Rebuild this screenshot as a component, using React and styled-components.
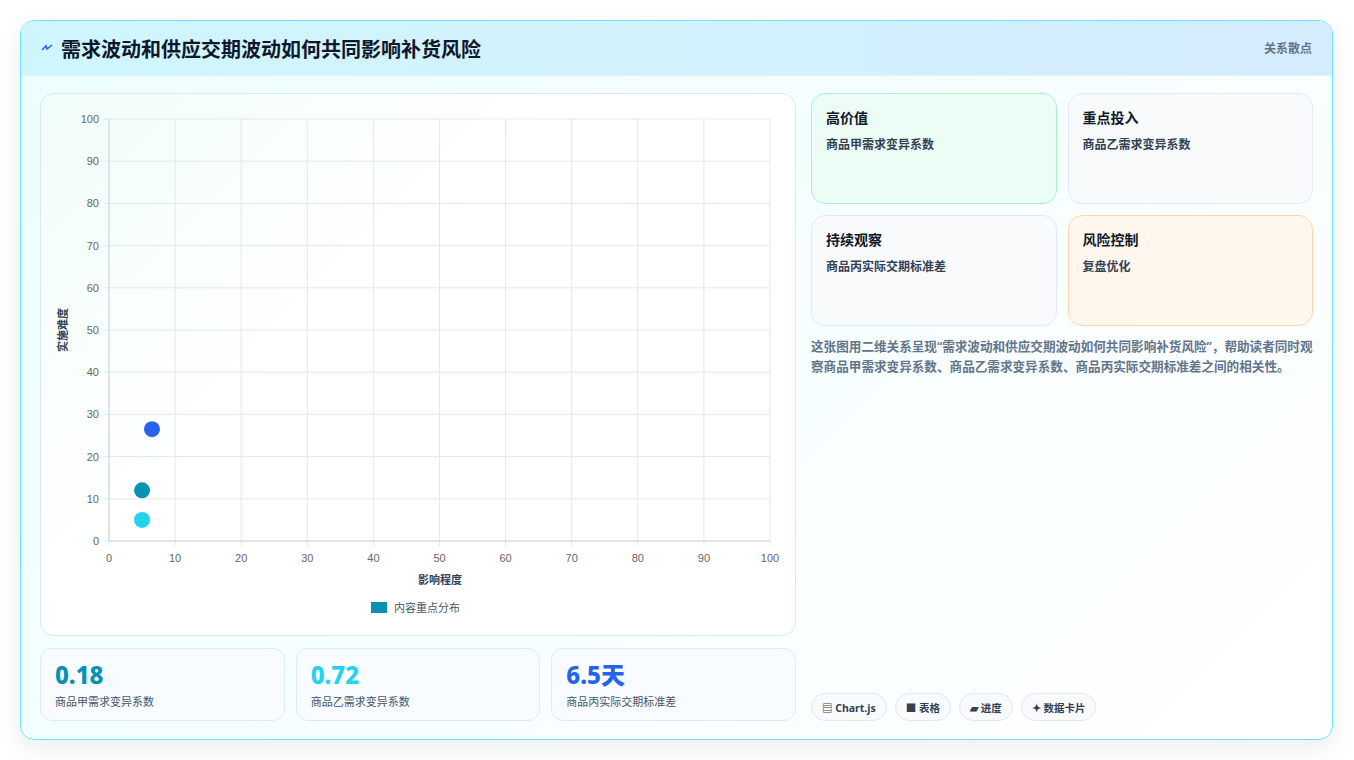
import styled, { createGlobalStyle } from "styled-components";

const Global = createGlobalStyle`
  html, body { margin: 0; padding: 0; background: #fff; }
  body { font-family: "Noto Sans", "Noto Sans CJK SC", sans-serif; }
  * { box-sizing: border-box; }
`;

const Page = styled.div`
  padding: 20px 21px 20px 20px;
  height: 760px;
`;

const Frame = styled.div`
  height: 720px;
  border: 1px solid #67e8f9;
  border-radius: 14px;
  overflow: hidden;
  background: linear-gradient(135deg, #ecfeff 0%, #f8feff 60%, #ffffff 100%);
  box-shadow: 0 8px 24px rgba(15, 23, 42, 0.08);
  display: flex;
  flex-direction: column;
`;

const Header = styled.div`
  height: 55px;
  flex: none;
  display: flex;
  align-items: center;
  justify-content: space-between;
  padding: 0 20px;
  background: linear-gradient(90deg, #cff6fe 0%, #d5ecfd 100%);
  border-bottom: 1px solid #e0f2fe;
`;

const Title = styled.h1`
  margin: 0;
  font-size: 20px;
  font-weight: 700;
  color: #0f172a;
  display: flex;
  align-items: center;
  gap: 8px;
`;

const Tag = styled.span`
  font-size: 12px;
  color: #64748b;
  font-weight: 600;
`;

const Body = styled.div`
  flex: 1;
  display: grid;
  grid-template-columns: 756px 1fr;
  gap: 15px;
  padding: 17px 19px 18px 19px;
`;

const LeftCol = styled.div`
  display: flex;
  flex-direction: column;
  gap: 12px;
`;

const ChartCard = styled.div`
  height: 543px;
  border: 1px solid #dbe7f3;
  border-radius: 14px;
  background: linear-gradient(135deg, #f0fdf9 0%, #ffffff 40%);
`;

const Stats = styled.div`
  display: grid;
  grid-template-columns: repeat(3, 1fr);
  gap: 11px;
`;

const Stat = styled.div`
  height: 73px;
  border: 1px solid #dbeafe;
  border-radius: 12px;
  background: #f8fbff;
  padding: 10px 14px;
`;

const StatValue = styled.div`
  font-size: 24px;
  font-weight: 800;
  color: ${(p) => p.$color};
  line-height: 32px;
`;

const StatLabel = styled.div`
  font-size: 11px;
  color: #475569;
  margin-top: 2px;
`;

const RightCol = styled.div`
  display: flex;
  flex-direction: column;
`;

const Grid = styled.div`
  display: grid;
  grid-template-columns: 1fr 1fr;
  gap: 11px 11px;
`;

const Quad = styled.div`
  height: 111px;
  border-radius: 14px;
  border: 1px solid ${(p) => p.$border};
  background: ${(p) => p.$bg};
  padding: 13px 14px;
`;

const QuadTitle = styled.div`
  font-size: 14px;
  font-weight: 700;
  color: #0f172a;
`;

const QuadText = styled.div`
  font-size: 12px;
  font-weight: 600;
  color: #334155;
  margin-top: 8px;
`;

const Desc = styled.p`
  margin: 11px 0 0;
  font-size: 12.6px;
  line-height: 20px;
  color: #64748b;
  font-weight: 600;
`;

const Chips = styled.div`
  margin-top: auto;
  display: flex;
  gap: 8px;
`;

const Chip = styled.span`
  height: 28px;
  padding: 0 10px;
  border: 1px solid #e2e8f0;
  border-radius: 14px;
  background: #f8fafc;
  font-size: 10.5px;
  font-weight: 700;
  color: #334155;
  display: flex;
  align-items: center;
  gap: 3px;
`;

const X0 = 68, X1 = 729, Y0 = 447, Y1 = 25;
const sx = (v) => X0 + ((X1 - X0) * v) / 100;
const sy = (v) => Y0 - ((Y0 - Y1) * v) / 100;
const ticks = [0, 10, 20, 30, 40, 50, 60, 70, 80, 90, 100];
const points = [
  { x: 6.5, y: 26.5, c: "#2563eb" },
  { x: 5, y: 12, c: "#0891b2" },
  { x: 5, y: 5, c: "#22d3ee" },
];

function Chart() {
  return (
    <svg width="754" height="541" style={{ display: "block" }}>
      {ticks.map((t) => (
        <g key={t}>
          <line x1={sx(t)} x2={sx(t)} y1={Y1} y2={Y0 + 5} stroke="#e2e8f0" />
          <line x1={X0 - 5} x2={X1} y1={sy(t)} y2={sy(t)} stroke="#e2e8f0" />
          <text x={X0 - 10} y={sy(t) + 4} fontSize="11" fill="#666" textAnchor="end" fontFamily="Liberation Sans, sans-serif">{t}</text>
          <text x={sx(t)} y={Y0 + 21} fontSize="11" fill="#666" textAnchor="middle" fontFamily="Liberation Sans, sans-serif">{t}</text>
        </g>
      ))}
      <line x1={X0} x2={X0} y1={Y1} y2={Y0} stroke="#cbd5e1" />
      <line x1={X0} x2={X1} y1={Y0} y2={Y0} stroke="#cbd5e1" />
      <text x="399" y="490" fontSize="11" fill="#334155" textAnchor="middle" fontWeight="600">影响程度</text>
      <text transform="translate(26 236) rotate(-90)" fontSize="11" fill="#334155" textAnchor="middle" fontWeight="600">实施难度</text>
      {points.map((p, i) => (
        <circle key={i} cx={sx(p.x)} cy={sy(p.y)} r="8" fill={p.c} />
      ))}
      <rect x="330" y="508" width="16" height="11" fill="#0891b2" />
      <text x="353" y="518" fontSize="11" fill="#475569">内容重点分布</text>
    </svg>
  );
}

export default function App() {
  return (
    <Page>
      <Global />
      <Frame>
        <Header>
          <Title>
            <svg width="12" height="12" viewBox="0 0 12 12">
              <path d="M1 8 L5 4 L6 7 L11 3" stroke="#2563eb" strokeWidth="1.6" fill="none" />
            </svg>
            需求波动和供应交期波动如何共同影响补货风险
          </Title>
          <Tag>关系散点</Tag>
        </Header>
        <Body>
          <LeftCol>
            <ChartCard>
              <Chart />
            </ChartCard>
            <Stats>
              <Stat>
                <StatValue $color="#0891b2">0.18</StatValue>
                <StatLabel>商品甲需求变异系数</StatLabel>
              </Stat>
              <Stat>
                <StatValue $color="#22d3ee">0.72</StatValue>
                <StatLabel>商品乙需求变异系数</StatLabel>
              </Stat>
              <Stat>
                <StatValue $color="#2563eb">6.5天</StatValue>
                <StatLabel>商品丙实际交期标准差</StatLabel>
              </Stat>
            </Stats>
          </LeftCol>
          <RightCol>
            <Grid>
              <Quad $bg="#ecfdf5" $border="#a7f3d0">
                <QuadTitle>高价值</QuadTitle>
                <QuadText>商品甲需求变异系数</QuadText>
              </Quad>
              <Quad $bg="#f8fafc" $border="#dbeafe">
                <QuadTitle>重点投入</QuadTitle>
                <QuadText>商品乙需求变异系数</QuadText>
              </Quad>
              <Quad $bg="#f8fafc" $border="#dbeafe">
                <QuadTitle>持续观察</QuadTitle>
                <QuadText>商品丙实际交期标准差</QuadText>
              </Quad>
              <Quad $bg="#fff7ed" $border="#fed7aa">
                <QuadTitle>风险控制</QuadTitle>
                <QuadText>复盘优化</QuadText>
              </Quad>
            </Grid>
            <Desc>
              这张图用二维关系呈现“需求波动和供应交期波动如何共同影响补货风险”，帮助读者同时观察商品甲需求变异系数、商品乙需求变异系数、商品丙实际交期标准差之间的相关性。
            </Desc>
            <Chips>
              <Chip>▤ Chart.js</Chip>
              <Chip>■ 表格</Chip>
              <Chip>▰ 进度</Chip>
              <Chip>✦ 数据卡片</Chip>
            </Chips>
          </RightCol>
        </Body>
      </Frame>
    </Page>
  );
}
